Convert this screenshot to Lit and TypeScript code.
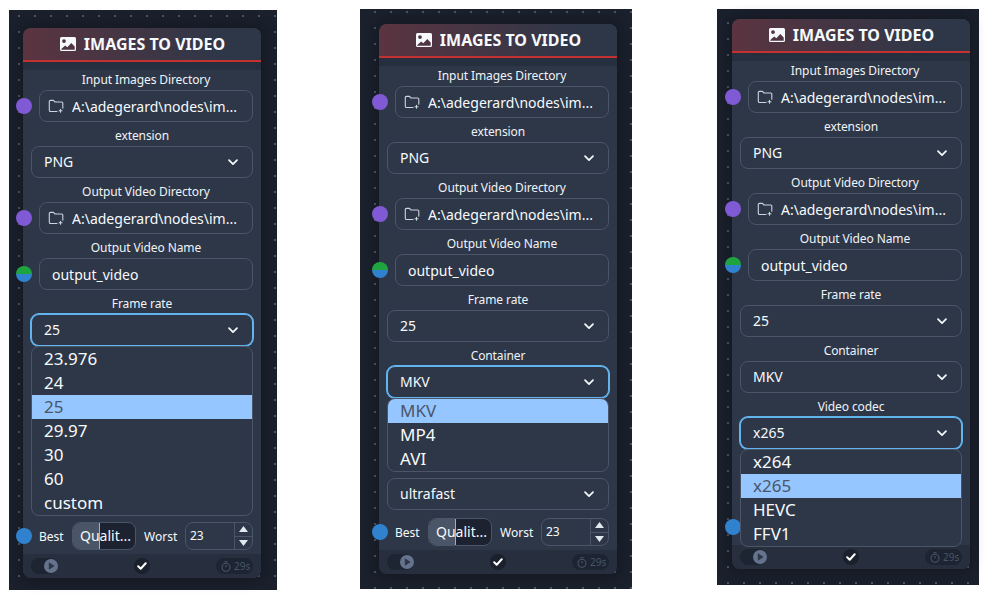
import { LitElement, html, css, svg, nothing } from "lit";
import { customElement, property } from "lit/decorators.js";

type W =
  | { kind: "dir"; label: string; value: string; socket: string }
  | { kind: "text"; label: string; value: string; socket: string }
  | { kind: "select"; label: string; value: string; options?: string[] };

const base = (frame: string, container: string, codec: string): W[] => [
  { kind: "dir", label: "Input Images Directory", value: "A:\\adegerard\\nodes\\im...", socket: "purple" },
  { kind: "select", label: "extension", value: "PNG" },
  { kind: "dir", label: "Output Video Directory", value: "A:\\adegerard\\nodes\\im...", socket: "purple" },
  { kind: "text", label: "Output Video Name", value: "output_video", socket: "split" },
  { kind: "select", label: "Frame rate", value: frame },
  { kind: "select", label: "Container", value: container },
  { kind: "select", label: "Video codec", value: codec },
  { kind: "select", label: "Preset", value: "ultrafast" },
];

const OPTIONS: Record<string, string[]> = {
  "Frame rate": ["23.976", "24", "25", "29.97", "30", "60", "custom"],
  Container: ["MKV", "MP4", "AVI"],
  "Video codec": ["x264", "x265", "HEVC", "FFV1"],
};

const folderIcon = svg`<svg class="folder" viewBox="0 0 16 16" width="16" height="16" fill="none" stroke="currentColor" stroke-width="1.1" stroke-linecap="round" stroke-linejoin="round"><path d="M9 13.5H2.600a1.300 1.300 0 0 1-1.300-1.300V3.600a1.200 1.200 0 0 1 1.200-1.200h3l1.500 1.600h6.600a1.200 1.200 0 0 1 1.200 1.200v5"/><path d="M12.500 11.200v3M11 12.700h3"/></svg>`;
const chevron = svg`<svg class="chev" viewBox="0 0 12 12" width="12" height="12" fill="none" stroke="currentColor" stroke-width="1.7" stroke-linecap="round" stroke-linejoin="round"><path d="M2 4.200l4 4 4-4"/></svg>`;
const imageIcon = svg`<svg class="ticon" viewBox="0 0 16 14" width="16" height="14"><path fill="#f7fafc" fill-rule="evenodd" d="M1.500 0h13A1.500 1.500 0 0 1 16 1.500v11a1.500 1.500 0 0 1-1.500 1.500h-13A1.500 1.500 0 0 1 0 12.500v-11A1.500 1.500 0 0 1 1.500 0zM1.300 12.700h13.400V9.500l-3.400-3.600-4 4.300-2.100-1.700-3.900 3.400zM4 2.200a1.900 1.900 0 1 0 0 3.800 1.900 1.900 0 0 0 0-3.800z"/></svg>`;

@customElement("vid-node")
class VidNode extends LitElement {
  @property({ type: Number }) open = -1;
  @property() container = "MKV";
  @property() codec = "x265";

  static styles = css`
    :host { display: block; width: 238px; height: 550px; font-family: "Noto Sans", sans-serif; color: #f7fafc; }
    .node { position: relative; width: 238px; height: 550px; display: flex; flex-direction: column; background: #2d3748; border-radius: 8px; box-shadow: 0 0 14px 2px rgba(0,0,0,.28); }
    .head { height: 32px; display: flex; align-items: center; justify-content: center; gap: 8px; padding-left: 1px; font-weight: 700; font-size: 16px; border-radius: 8px 8px 0 0; background: linear-gradient(90deg, #5b3440 0%, #2d3748 85%); }
    .ticon { flex: none; }
    .red { height: 2px; background: #c53030; }
    .strip { height: 8px; background: #262f3d; }
    .widgets { display: flex; flex-direction: column; gap: 4px; }
    .label { height: 20px; line-height: 20px; font-size: 12px; letter-spacing: -0.1px; text-align: center; color: #f0f3f7; padding-left: 0; }
    .label.sock { padding-left: 8px; }
    .fieldrow { position: relative; padding: 0 8px; }
    .fieldrow.sock { padding-left: 16px; }
    .socket { position: absolute; left: -7px; top: 8px; width: 16px; height: 16px; border-radius: 50%; z-index: 1; }
    .purple { background: #805ad5; }
    .blue { background: #3182ce; }
    .split { background: linear-gradient(180deg, #1fa53f 50%, #3182ce 50%); }
    .box { box-sizing: border-box; height: 32px; display: flex; align-items: center; border: 1px solid #4a5568; border-radius: 8px; font-size: 14px; color: #f7fafc; background: #2d3748; position: relative; }
    .box.dir { padding-left: 8px; gap: 8px; }
    .box.text { padding-left: 12px; }
    .box.sel { padding-left: 12px; padding-right: 13px; justify-content: space-between; }
    .box.sel span { position: relative; top: -1px; }
    .box.focus { border-color: #63b3ed; box-shadow: 0 0 0 1px #63b3ed; }
    .folder { color: #cbd5e0; flex: none; }
    .chev { flex: none; color: #f7fafc; }
    .menu { position: absolute; left: 8px; right: 8px; top: 32px; z-index: 3; box-sizing: border-box; background: #2d3748; border: 1px solid #4a5568; border-radius: 8px; overflow: hidden; font-size: 17px; }
    .opt { height: 24px; line-height: 24px; padding-left: 12px; color: #f7fafc; }
    .opt.on { background: #96c6ff; color: #4a5568; }
    .row { position: relative; display: flex; align-items: center; height: 28px; margin-top: 8px; padding: 0 8px 0 16px; font-size: 12px; }
    .row .socket { top: 6px; }
    .best { width: 33px; flex: none; }
    .slider { box-sizing: border-box; width: 64px; height: 28px; flex: none; display: flex; position: relative; border: 1px solid #4a5568; border-radius: 8px; background: #1c2230; overflow: hidden; font-size: 14px; }
    .fill { box-sizing: border-box; width: 27px; flex: none; background: #4a5568; border-right: 1px solid #a0aec0; }
    .sliderText { position: absolute; inset: 0; padding-left: 3px; text-align: center; line-height: 26px; }
    .worst { width: 41px; flex: none; margin-left: 8px; }
    .num { box-sizing: border-box; width: 68px; height: 28px; flex: none; display: flex; border: 1px solid #4a5568; border-radius: 8px; font-size: 12px; }
    .numv { flex: 1; padding-left: 4px; line-height: 26px; }
    .step { width: 17px; flex: none; border-left: 1px solid #4a5568; display: flex; flex-direction: column; }
    .step div { flex: 1; display: flex; align-items: center; justify-content: center; }
    .step div + div { border-top: 1px solid #4a5568; }
    .foot { height: 24px; margin-top: 4px; box-sizing: border-box; padding: 4px 8px; display: flex; justify-content: space-between; align-items: center; position: relative; background: #272f3e; border-radius: 0 0 8px 8px; }
    .pill { height: 16px; border-radius: 8px; background: #1d2432; display: flex; align-items: center; }
    .playp { width: 27px; justify-content: flex-end; }
    .check { position: absolute; left: 111px; top: 4px; width: 16px; height: 16px; border-radius: 50%; background: #1a202c; display: flex; align-items: center; justify-content: center; }
    .timer { width: 37px; padding-left: 5px; box-sizing: border-box; gap: 3px; font-size: 10px; color: #4a5568; }
  `;

  private widget(w: W, i: number) {
    const opts = this.open === i ? OPTIONS[w.label] : null;
    const hasSock = w.kind !== "select";
    return html`<div>
      <div class="label ${hasSock ? "sock" : ""}">${w.label}</div>
      <div class="fieldrow ${hasSock ? "sock" : ""}">
        ${w.kind !== "select" ? html`<span class="socket ${w.socket}"></span>` : nothing}
        ${w.kind === "dir"
          ? html`<div class="box dir">${folderIcon}<span>${w.value}</span></div>`
          : w.kind === "text"
          ? html`<div class="box text">${w.value}</div>`
          : html`<div class="box sel ${opts ? "focus" : ""}"><span>${w.value}</span>${chevron}</div>`}
        ${opts
          ? html`<div class="menu">${opts.map((o) => html`<div class="opt ${o === w.value ? "on" : ""}">${o}</div>`)}</div>`
          : nothing}
      </div>
    </div>`;
  }

  render() {
    const list = base("25", this.container, this.codec);
    return html`<div class="node">
      <div class="head">${imageIcon}<span>IMAGES TO VIDEO</span></div>
      <div class="red"></div>
      <div class="strip"></div>
      <div class="widgets">${list.map((w, i) => this.widget(w, i))}</div>
      <div class="row">
        <span class="socket blue"></span>
        <span class="best">Best</span>
        <div class="slider"><div class="fill"></div><div class="sliderText">Qualit...</div></div>
        <span class="worst">Worst</span>
        <div class="num">
          <div class="numv">23</div>
          <div class="step">
            <div><svg width="9" height="6" viewBox="0 0 9 6"><path d="M4.500 0L9 6H0z" fill="#e2e8f0"/></svg></div>
            <div><svg width="9" height="6" viewBox="0 0 9 6"><path d="M4.500 6L9 0H0z" fill="#e2e8f0"/></svg></div>
          </div>
        </div>
      </div>
      <div class="foot">
        <div class="pill playp"><svg width="14" height="14" viewBox="0 0 14 14"><circle cx="7" cy="7" r="7" fill="#66738c"/><path d="M4.800 3.300v7.400L10.700 7z" fill="#2d3748"/></svg></div>
        <div class="check"><svg width="10" height="8" viewBox="0 0 10 8" fill="none" stroke="#fff" stroke-width="2" stroke-linecap="round" stroke-linejoin="round"><path d="M1.200 4.200l2.500 2.500 5-5.400"/></svg></div>
        <div class="pill timer"><svg width="10" height="11" viewBox="0 0 10 11" fill="none" stroke="#4a5568" stroke-width="1.100"><circle cx="5" cy="6.300" r="4"/><path d="M3.300.8h3.400M5 6.300V4"/></svg><span>29s</span></div>
      </div>
    </div>`;
  }
}

@customElement("app-root")
class AppRoot extends LitElement {
  static styles = css`
    :host { display: flex; align-items: flex-start; width: 1000px; height: 600px; background: #fff; overflow: hidden; }
    .panel { box-sizing: border-box; background-color: #1a202c; background-image: radial-gradient(circle at center, #4a5568 1px, transparent 1.2px); background-size: 16px 16px; }
    .p1 { margin: 10px 0 0 9px; width: 268px; height: 580px; padding: 18px 0 0 14px; background-position: 2px -2px; }
    .p2 { margin: 9px 0 0 83px; width: 272px; height: 580px; padding: 15px 0 0 19px; background-position: 7px -5px; }
    .p3 { margin: 9px 0 0 85px; width: 262px; height: 576px; padding: 10px 0 0 15px; background-position: 3px 6px; }
  `;
  render() {
    return html`
      <div class="panel p1"><vid-node .open=${4}></vid-node></div>
      <div class="panel p2"><vid-node .open=${5}></vid-node></div>
      <div class="panel p3"><vid-node .open=${6}></vid-node></div>
    `;
  }
}
